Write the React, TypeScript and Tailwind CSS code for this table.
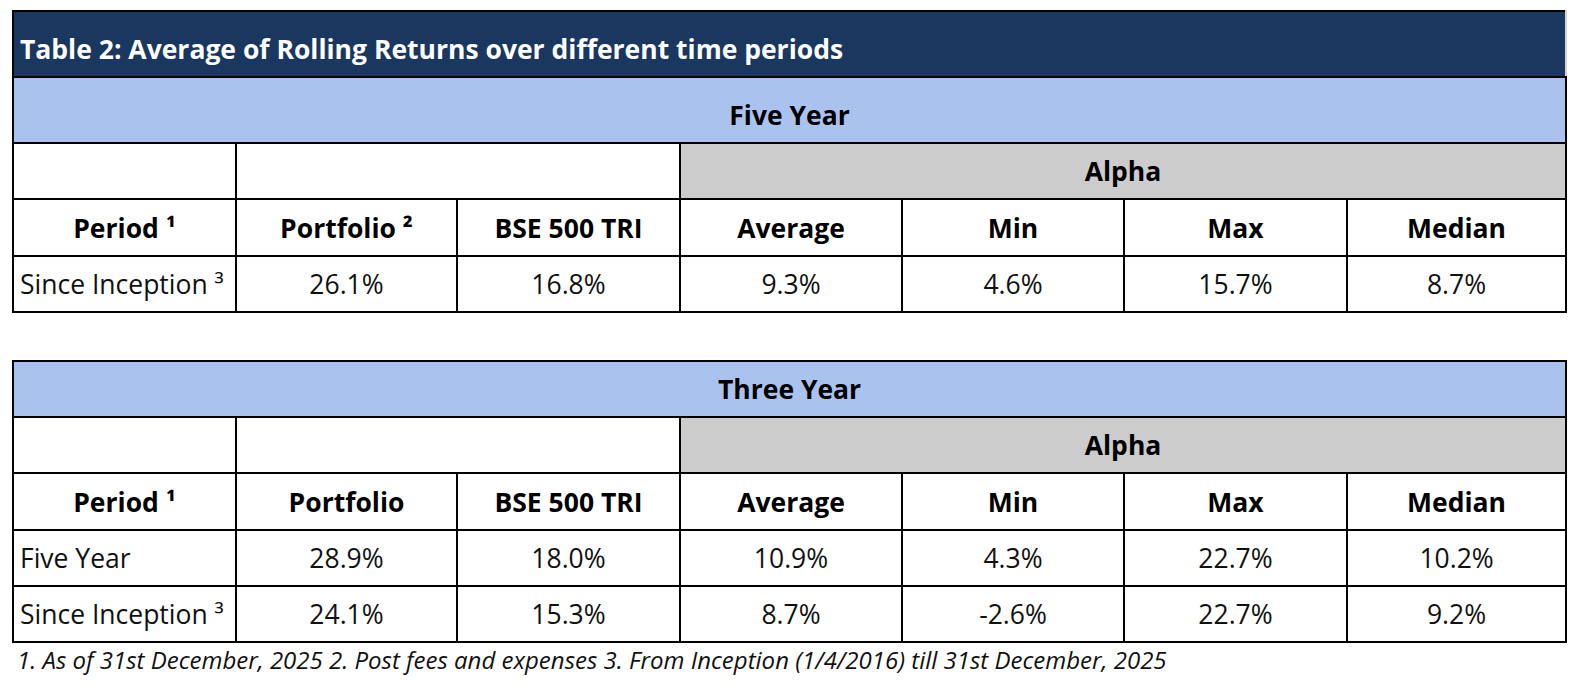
import React from "react";

const cols = ["w-[223px]", "w-[221px]", "w-[223px]", "w-[222px]", "w-[222px]", "w-[223px]", "w-[219px]"];

const cell = "border-2 border-black align-bottom pb-[10px] leading-[34px] text-[26.5px]";
const headCell = `${cell} font-bold text-center text-black`;
const dataCell = `${cell} text-center text-[#111111]`;

type Row = string[];

function ReturnsTable({
  title,
  section,
  sectionHeight,
  portfolioLabel,
  rows,
}: {
  title?: string;
  section: string;
  sectionHeight: string;
  portfolioLabel: string;
  rows: Row[];
}) {
  return (
    <table className="table-fixed border-collapse w-[1553px]">
      <colgroup>
        {cols.map((c, i) => (
          <col key={i} className={c} />
        ))}
      </colgroup>
      <tbody>
        {title && (
          <tr className="h-[66px]">
            <td
              colSpan={7}
              className="border-2 border-black border-r-[#d4d4d4] bg-[#19375f] text-white font-bold text-[26.5px] leading-[34px] text-left pl-[6px] align-bottom pb-[10px]"
            >
              {title}
            </td>
          </tr>
        )}
        <tr className={sectionHeight}>
          <td colSpan={7} className={`${headCell} bg-[#a9c3ee]`}>
            {section}
          </td>
        </tr>
        <tr className="h-[56px]">
          <td className={`${cell} bg-white`}></td>
          <td colSpan={2} className={`${cell} bg-white`}></td>
          <td colSpan={4} className={`${headCell} bg-[#cccccc]`}>
            Alpha
          </td>
        </tr>
        <tr className="h-[57px]">
          <td className={headCell}>Period ¹</td>
          <td className={headCell}>{portfolioLabel}</td>
          <td className={headCell}>BSE 500 TRI</td>
          <td className={headCell}>Average</td>
          <td className={headCell}>Min</td>
          <td className={headCell}>Max</td>
          <td className={headCell}>Median</td>
        </tr>
        {rows.map((r, i) => (
          <tr key={i} className="h-[56px]">
            <td className={`${cell} text-left pl-[6px] text-[#111111]`}>{r[0]}</td>
            {r.slice(1).map((v, j) => (
              <td key={j} className={dataCell}>
                {v}
              </td>
            ))}
          </tr>
        ))}
      </tbody>
    </table>
  );
}

export default function App() {
  return (
    <div
      className="w-[1596px] h-[686px] bg-white overflow-hidden pt-[10px] pl-[12px]"
      style={{ fontFamily: '"Open Sans", "Noto Sans", sans-serif' }}
    >
      <ReturnsTable
        title="Table 2: Average of Rolling Returns over different time periods"
        section="Five Year"
        sectionHeight="h-[66px]"
        portfolioLabel="Portfolio ²"
        rows={[["Since Inception ³", "26.1%", "16.8%", "9.3%", "4.6%", "15.7%", "8.7%"]]}
      />
      <div className="mt-[47px]">
        <ReturnsTable
          section="Three Year"
          sectionHeight="h-[56px]"
          portfolioLabel="Portfolio"
          rows={[
            ["Five Year", "28.9%", "18.0%", "10.9%", "4.3%", "22.7%", "10.2%"],
            ["Since Inception ³", "24.1%", "15.3%", "8.7%", "-2.6%", "22.7%", "9.2%"],
          ]}
        />
      </div>
      <p className="mt-[1px] pl-[5px] italic text-[24px] leading-[32px] text-[#111111]">
        1. As of 31st December, 2025 2. Post fees and expenses 3. From Inception (1/4/2016) till 31st December, 2025
      </p>
    </div>
  );
}
